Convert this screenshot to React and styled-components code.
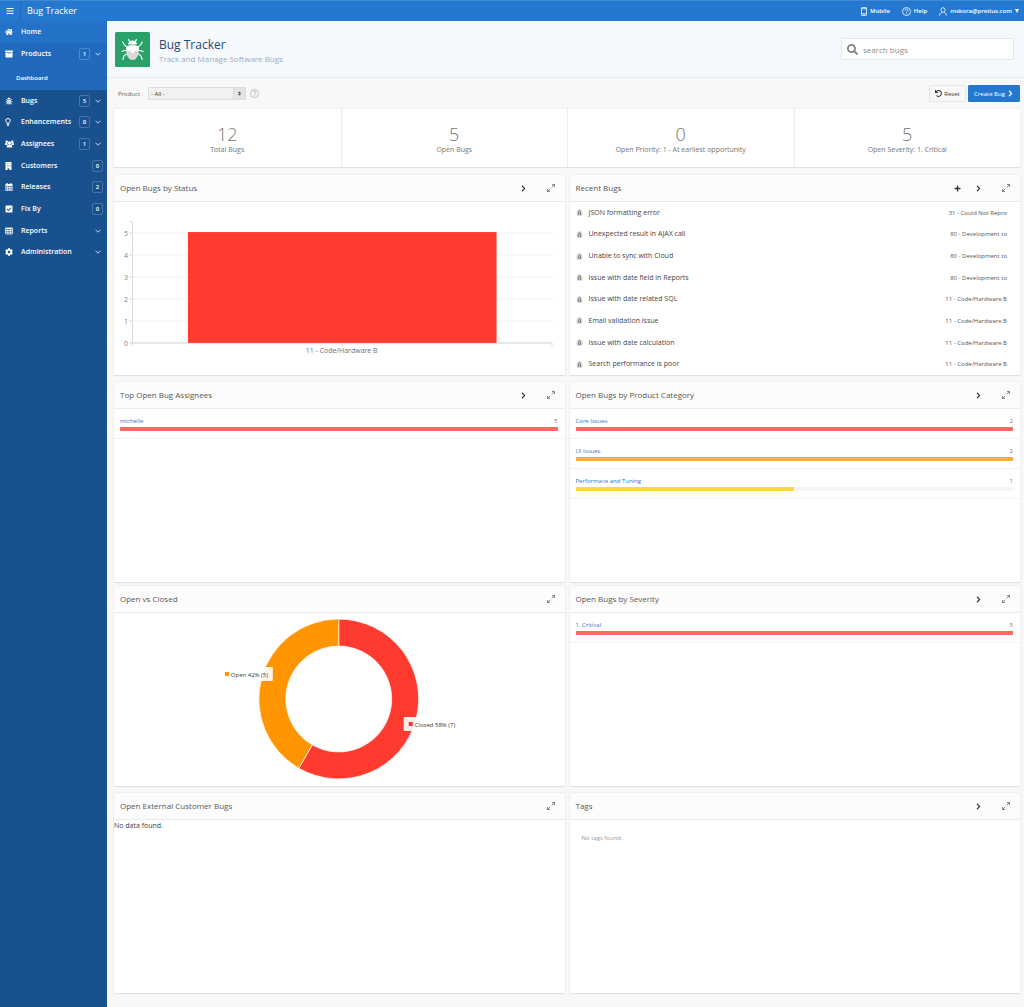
import { useState } from 'react';
import styled, { createGlobalStyle } from 'styled-components';
import {
  FaHome,
  FaArchive,
  FaCheckSquare,
  FaCog,
  FaSearch,
  FaUndo,
  FaPlus,
  FaChevronRight,
  FaBars,
  FaSort,
} from 'react-icons/fa';

const GlobalStyle = createGlobalStyle`
  * {
    box-sizing: border-box;
  }
  body {
    margin: 0;
    background: #f8f8f8;
    color: #404040;
    font-family: 'Open Sans', 'Noto Sans', sans-serif;
    font-size: 8px;
    line-height: 12px;
  }
  button, input, select {
    font-family: inherit;
  }
  button {
    cursor: pointer;
  }
  a {
    text-decoration: none;
  }
  h1, h2, p, ul {
    margin: 0;
    padding: 0;
  }
  svg {
    flex-shrink: 0;
  }
`;

// ---------- top bar ----------
const TopBar = styled.header`
  display: flex;
  align-items: center;
  height: 21px;
  padding-right: 5px;
  background: #2578cf;
  border-top: 1px solid #3f88d6;
  color: #fff;
`;
const MenuBtn = styled.button`
  display: flex;
  align-items: center;
  justify-content: center;
  width: 21px;
  height: 20px;
  padding: 0;
  background: none;
  border: 0;
  border-right: 1px solid #2169b8;
  color: #fff;
  font-size: 8px;
`;
const AppName = styled.a`
  flex: 1;
  padding-left: 6px;
  color: #fff;
  font-size: 9px;
`;
const TopLinks = styled.nav`
  display: flex;
  align-items: center;
  gap: 12px;
`;
const TopLink = styled.a`
  display: flex;
  align-items: center;
  gap: 3px;
  color: #fff;
  font-size: 6px;
  font-weight: 600;
`;

// ---------- side bar ----------
const Shell = styled.div`
  display: grid;
  grid-template-columns: 107px 1fr;
  min-height: calc(100vh - 21px);
`;
const SideBar = styled.nav`
  background: #19518f;
`;
const OpenGroup = styled.div`
  background: #2069bc;
`;
const NavList = styled.div`
  display: grid;
  grid-auto-rows: 1fr;
  height: 173px;
`;
const NavLink = styled.a`
  display: flex;
  align-items: center;
  height: ${(props) => (props.$fill ? 'auto' : '22px')};
  padding: 0 4px 0 5px;
  background: ${(props) => (props.$current ? '#2372c7' : 'transparent')};
  color: #fff;
  font-size: 7px;
  font-weight: 600;
`;
const NavIcon = styled.span`
  display: flex;
  width: 16px;
  font-size: 8px;
`;
const NavText = styled.span`
  flex: 1;
`;
const Badge = styled.span`
  width: 11px;
  height: 12px;
  border: 1px solid #ffffff33;
  border-radius: 2px;
  font-size: 6px;
  line-height: 10px;
  text-align: center;
`;
const Toggle = styled.span`
  display: flex;
  justify-content: flex-end;
  width: 13px;
  padding-right: 2px;
`;
const SubLink = styled.a`
  display: block;
  height: 25px;
  padding-left: 16px;
  color: #fff;
  font-size: 6px;
  font-weight: 600;
  line-height: 26px;
`;

// ---------- page header ----------
const Hero = styled.div`
  display: flex;
  align-items: center;
  gap: 9px;
  height: 57px;
  padding: 0 10px 0 8px;
  background: #f5f9fe;
  border-bottom: 1px solid #e8ebee;
`;
const HeroText = styled.div`
  flex: 1;
  padding-top: 4px;
`;
const Title = styled.h1`
  color: #1d4a7d;
  font-size: 12px;
  font-weight: 400;
  line-height: 16px;
`;
const SubTitle = styled.p`
  color: #9cadc1;
  font-size: 8px;
`;
const SearchBox = styled.label`
  display: flex;
  align-items: center;
  gap: 5px;
  width: 173px;
  height: 22px;
  padding: 0 5px;
  background: #fff;
  border: 1px solid #dbe8f6;
  border-radius: 1px;
  color: #808080;
  font-size: 11px;
`;
const SearchInput = styled.input`
  flex: 1;
  min-width: 0;
  padding: 0;
  background: none;
  border: 0;
  outline: 0;
  color: #404040;
  font-size: 8px;
  &::placeholder {
    color: #8a8a8a;
  }
`;

// ---------- filter row ----------
const FilterRow = styled.div`
  display: flex;
  align-items: center;
  height: 31px;
  padding: 0 4px 0 11px;
`;
const FilterLabel = styled.label`
  width: 30px;
  color: #606060;
  font-size: 6px;
`;
const SelectWrap = styled.div`
  display: flex;
  width: 98px;
  height: 13px;
  background: #f1f1f1;
  border: 1px solid #dcdcdc;
  border-radius: 1px;
`;
const Select = styled.select`
  flex: 1;
  padding: 0 2px;
  appearance: none;
  background: none;
  border: 0;
  color: #404040;
  font-size: 6px;
`;
const SelectArrow = styled.span`
  display: flex;
  align-items: center;
  justify-content: center;
  width: 12px;
  background: #e4e4e4;
  border-left: 1px solid #dcdcdc;
  color: #505050;
  font-size: 5px;
  pointer-events: none;
`;
const HelpBtn = styled.button`
  display: flex;
  margin: 0 auto 0 4px;
  padding: 0;
  background: none;
  border: 0;
  color: #b0b0b0;
`;
const Btn = styled.button`
  display: flex;
  align-items: center;
  justify-content: center;
  gap: 2px;
  width: ${(props) => (props.$hot ? '52px' : '37px')};
  height: 17px;
  margin-left: 2px;
  padding: 0;
  background: ${(props) => (props.$hot ? '#2578cf' : '#f8f8f8')};
  border: 1px solid ${(props) => (props.$hot ? '#2578cf' : '#e6e6e6')};
  border-radius: 1px;
  color: ${(props) => (props.$hot ? '#fff' : '#383838')};
  font-size: 6px;
  svg {
    width: 7px;
    height: 7px;
  }
`;

// ---------- content ----------
const Content = styled.div`
  display: grid;
  gap: 8px;
  padding: 0 4px 14px 7px;
`;
const Stats = styled.div`
  display: grid;
  grid-template-columns: repeat(4, 1fr);
  background: #fff;
  box-shadow: 0 0 1px #00000033, 0 1px 1px #0000000f;
`;
const Stat = styled.a`
  height: 58px;
  padding-top: 15px;
  border-left: 1px solid #ececec;
  color: #757575;
  font-size: 7px;
  line-height: 12px;
  text-align: center;
  &:first-child {
    border-left: 0;
  }
`;
const StatNumber = styled.div`
  font-size: 18px;
  font-weight: 300;
  line-height: 20px;
`;
const Groups = styled.div`
  display: grid;
  gap: 4px;
`;
const PanelGrid = styled.div`
  display: grid;
  grid-template-columns: repeat(2, minmax(0, 1fr));
  gap: 7px 5px;
`;
const PanelBox = styled.section`
  height: 200px;
  background: #fff;
  box-shadow: 0 0 1px #00000033, 0 1px 1px #0000000f;
`;
const PanelHead = styled.div`
  display: flex;
  align-items: center;
  height: 27px;
  padding: 0 10px 0 6px;
  background: #fcfcfc;
  border-bottom: 1px solid #ebebeb;
`;
const PanelTitle = styled.h2`
  flex: 1;
  color: #585858;
  font-size: 8px;
  font-weight: 400;
`;
const IconBtn = styled.button`
  display: flex;
  margin-left: ${(props) => (props.$wide ? '20px' : '14px')};
  padding: 0;
  background: none;
  border: 0;
  color: #303030;
  font-size: 7px;
`;
const BugList = styled.ul`
  display: grid;
  grid-auto-rows: 1fr;
  height: 173px;
  list-style: none;
`;
const BugItem = styled.li`
  display: flex;
  align-items: center;
  gap: 6px;
  padding: 0 13px 0 6px;
  color: #8a8a8a;
  font-size: 7px;
`;
const BugLink = styled.a`
  flex: 1;
  color: #454545;
`;
const BugStatus = styled.span`
  color: #555;
  font-size: 6px;
`;
const MeterRow = styled.div`
  height: 30px;
  padding: 6px 7px 0 6px;
  border-bottom: 1px solid #f3f3f3;
`;
const MeterHead = styled.div`
  display: flex;
  justify-content: space-between;
  color: #757575;
  font-size: 6px;
`;
const MeterLink = styled.a`
  color: #3a74bd;
`;
const Track = styled.div`
  height: 4px;
  background: #f6f6f6;
`;
const Fill = styled.div`
  height: 4px;
  background: ${(props) => props.$color};
`;
const Empty = styled.p`
  padding: ${(props) => (props.$small ? '12px' : '0')};
  color: ${(props) => (props.$small ? '#999' : '#404040')};
  font-size: ${(props) => (props.$small ? '6px' : '7px')};
`;
const Chart = styled.svg`
  display: block;
  width: 100%;
  height: 172px;
  font-size: ${(props) => props.$size};
`;

// ---------- icons ----------
function Chevron() {
  return (
    <svg width="6" height="4" viewBox="0 0 6 4" fill="none" stroke="#c5d5e8">
      <path d="M.5.7 3 3.2 5.5.7" />
    </svg>
  );
}

function HelpIcon() {
  return (
    <svg width="9" height="9" viewBox="0 0 18 18" fill="none" stroke="currentColor" strokeWidth="1.6">
      <circle cx="9" cy="9" r="8" />
      <path d="M6.4 7a2.6 2.6 0 1 1 3.8 2.3C9.3 9.8 9 10.2 9 11.3M9 12.8v1.6" />
    </svg>
  );
}

function PhoneIcon() {
  return (
    <svg width="6" height="9" viewBox="0 0 12 18" fill="none" stroke="currentColor" strokeWidth="1.6">
      <rect x="1" y="1" width="10" height="16" rx="1.5" />
      <path d="M1 3.5h10M1 13.500h10M5 15.300h2" />
    </svg>
  );
}

function UserIcon() {
  return (
    <svg width="8" height="9" viewBox="0 0 16 18" fill="none" stroke="currentColor" strokeWidth="1.7">
      <path d="M8 1.500c-2.500 0-4 1.800-4 4.300s1.500 4.700 4 4.700 4-2.200 4-4.700S10.500 1.500 8 1.500zM5.500 10c0 2-4.500 2-4.500 7M10.500 10c0 2 4.500 2 4.500 7" />
    </svg>
  );
}

function CaretIcon() {
  return (
    <svg width="4" height="4" viewBox="0 0 4 4" fill="currentColor">
      <path d="M0 0h4L2 4z" />
    </svg>
  );
}

function ExpandIcon() {
  return (
    <svg width="8" height="8" viewBox="0 0 16 16" fill="none" stroke="#6a6a6a" strokeWidth="1.6">
      <path d="M10 1h5v5M15 1 9.500 6.500M6 15H1v-5M1 15l5.500-5.500" />
    </svg>
  );
}

function BugIcon({ size = 8 }) {
  return (
    <svg width={size} height={size} viewBox="0 0 16 16" fill="currentColor">
      <path d="M5 4a3 3 0 0 1 6 0zM4.500 5h7v8q-1.500 2-3 2V7h-1v8q-1.500 0-3-2z" />
      <path
        d="M4.500 6.500 2 4M11.500 6.500 14 4M4.500 9.500H1M11.500 9.500H15M5 12l-3 2.500M11 12l3 2.500"
        fill="none"
        stroke="currentColor"
        strokeWidth="1.5"
      />
    </svg>
  );
}

function BulbIcon() {
  return (
    <svg width="6" height="8" viewBox="0 0 12 16" fill="none" stroke="currentColor" strokeWidth="2">
      <path d="M4 10.500C4 8.500 1.500 8 1.500 5.200a4.500 4.200 0 0 1 9 0C10.500 8 8 8.500 8 10.500z" />
      <path d="M3.500 12.500h5M4.500 15h3" />
    </svg>
  );
}

function UsersIcon() {
  return (
    <svg width="9" height="8" viewBox="0 0 18 16" fill="currentColor">
      <circle cx="3.500" cy="3.500" r="2.500" />
      <circle cx="14.500" cy="3.500" r="2.500" />
      <circle cx="9" cy="6" r="3.300" />
      <path d="M0 10V8q0-2 1.500-2h3l1 3L4 10zM18 10V8q0-2-1.500-2h-3l-1 3 1.500 1zM3.500 15v-2q0-3.500 2.500-3.500h6q2.500 0 2.500 3.500v2z" />
    </svg>
  );
}

function BuildingIcon() {
  return (
    <svg width="7" height="8" viewBox="0 0 14 16" fill="currentColor">
      <path
        fillRule="evenodd"
        d="M1 0h12v16H9v-3H5v3H1zM4 3v1.200h1.200V3zm3 0v1.200h1.200V3zm3 0v1.200h1.200V3zM4 6v1.200h1.200V6zm3 0v1.200h1.200V6zm3 0v1.200h1.200V6zM4 9v1.200h1.200V9zm3 0v1.200h1.200V9zm3 0v1.200h1.200V9z"
      />
    </svg>
  );
}

function CalendarIcon() {
  return (
    <svg width="8" height="8" viewBox="0 0 16 16" fill="currentColor">
      <path
        fillRule="evenodd"
        d="M1 2h2V0h2.500v2h5V0H13v2h2v14H1zM2.200 6v2.200h2.600V6zm4 0v2.200h3V6zm4.400 0v2.200h3V6zM2.200 9.500v2h2.600v-2zm4 0v2h3v-2zm4.400 0v2h3v-2zM2.200 12.800v2h2.600v-2zm4 0v2h3v-2zm4.400 0v2h3v-2z"
      />
    </svg>
  );
}

function TableIcon() {
  return (
    <svg width="8" height="8" viewBox="0 0 16 16" fill="none" stroke="currentColor" strokeWidth="1.5">
      <rect x="1" y="2" width="14" height="12" rx="1" />
      <path d="M1 3h14" strokeWidth="2.5" />
      <path d="M1 7h14M1 10.500h14M5.500 3v11M10.500 3v11" />
    </svg>
  );
}

function AppLogo() {
  return (
    <svg width="35" height="35" viewBox="0 0 35 35">
      <rect width="35" height="35" rx="1.5" fill="#28a268" />
      <g fill="none" stroke="#fff" strokeWidth="1.2">
        <path d="M15.500 11c-.3-1.500-1.700-2-2-3.800M19.500 11c.3-1.500 1.700-2 2-3.800" />
        <path d="M12.500 15.500c-1.500-1.500-4.300-2-4.800-6M22.500 15.500c1.500-1.500 4.300-2 4.800-6" />
        <path d="M12 18.500c-2 0-4 .2-5.500 1.200M23 18.500c2 0 4 .2 5.500 1.200" />
        <path d="M12.500 21.500c-2 .8-4.600 2.500-4.600 6.500M22.500 21.500c2 .8 4.600 2.500 4.600 6.500" />
      </g>
      <path d="M13 12.500a4.500 4 0 0 1 9 0z" fill="#fff" />
      <path d="M11.500 14.500q6-2.500 12 0c1 6-.7 13.500-6 13.500s-7-7.500-6-13.500z" fill="#d9d9d9" />
      <path d="M11.500 14.500q6-2.500 12 0c.3 2 .3 3.500 0 5l-3-1-3 3-3-3-3 1c-.3-1.500-.3-3 0-5z" fill="#fff" />
    </svg>
  );
}

// ---------- data ----------
const navItems = [
  { text: 'Bugs', icon: <BugIcon />, count: 5, open: true },
  { text: 'Enhancements', icon: <BulbIcon />, count: 0, open: true },
  { text: 'Assignees', icon: <UsersIcon />, count: 1, open: true },
  { text: 'Customers', icon: <BuildingIcon />, count: 0 },
  { text: 'Releases', icon: <CalendarIcon />, count: 2 },
  { text: 'Fix By', icon: <FaCheckSquare />, count: 0 },
  { text: 'Reports', icon: <TableIcon />, open: true },
  { text: 'Administration', icon: <FaCog />, open: true },
];

const stats = [
  { value: 12, text: 'Total Bugs' },
  { value: 5, text: 'Open Bugs' },
  { value: 0, text: 'Open Priority: 1 - At earliest opportunity' },
  { value: 5, text: 'Open Severity: 1. Critical' },
];

const recentBugs = [
  ['JSON formatting error', '31 - Could Not Repro'],
  ['Unexpected result in AJAX call', '80 - Development to'],
  ['Unable to sync with Cloud', '80 - Development to'],
  ['Issue with date field in Reports', '80 - Development to'],
  ['Issue with date related SQL', '11 - Code/Hardware B'],
  ['Email validation issue', '11 - Code/Hardware B'],
  ['Issue with date calculation', '11 - Code/Hardware B'],
  ['Search performance is poor', '11 - Code/Hardware B'],
];

const categories = [
  { text: 'Core Issues', value: 2, color: '#ff6961' },
  { text: 'UI Issues', value: 2, color: '#ffab3d' },
  { text: 'Performace and Tuning', value: 1, color: '#ffd83d' },
];

// ---------- parts ----------
function NavItem({ item, fill, current }) {
  return (
    <NavLink href="#" $fill={fill} $current={current}>
      <NavIcon>{item.icon}</NavIcon>
      <NavText>{item.text}</NavText>
      {item.count !== undefined && <Badge>{item.count}</Badge>}
      {item.open && (
        <Toggle>
          <Chevron />
        </Toggle>
      )}
    </NavLink>
  );
}

function Panel({ title, add, more, children }) {
  return (
    <PanelBox>
      <PanelHead>
        <PanelTitle>{title}</PanelTitle>
        {add && (
          <IconBtn aria-label="Add">
            <FaPlus />
          </IconBtn>
        )}
        {more && (
          <IconBtn aria-label="View all">
            <FaChevronRight />
          </IconBtn>
        )}
        <IconBtn $wide aria-label="Maximize">
          <ExpandIcon />
        </IconBtn>
      </PanelHead>
      {children}
    </PanelBox>
  );
}

function Meters({ rows }) {
  const max = Math.max(...rows.map((row) => row.value));
  return rows.map((row) => (
    <MeterRow key={row.text}>
      <MeterHead>
        <MeterLink href="#">{row.text}</MeterLink>
        <span>{row.value}</span>
      </MeterHead>
      <Track>
        <Fill $color={row.color} style={{ width: (row.value / max) * 100 + '%' }} />
      </Track>
    </MeterRow>
  ));
}

function StatusChart() {
  const ticks = [0, 1, 2, 3, 4, 5];
  return (
    <Chart $size="7px" viewBox="0 0 451 172" role="img" aria-label="Open bugs by status">
      {ticks.map((n) => (
        <g key={n}>
          <path d={`M19 ${141 - n * 22}H439`} stroke="#f1f1f1" />
          <path d={`M15 ${141 - n * 22}h4`} stroke="#d8d8d8" />
          <text x="14" y={144 - n * 22} textAnchor="end" fill="#808080">
            {n}
          </text>
        </g>
      ))}
      <path d="M15.500 19.500h3v124M18.500 141h420v3M228.500 141v3" fill="none" stroke="#d8d8d8" />
      <rect x="74" y="30" width="309" height="111" fill="#ff3b30" />
      <text x="228" y="151" textAnchor="middle" fill="#707070">
        11 - Code/Hardware B
      </text>
    </Chart>
  );
}

function DonutChart() {
  // split angle of the closed share (7 of 12)
  const a = (7 / 12) * 2 * Math.PI;
  const cx = 225;
  const cy = 86;
  const point = (r) => `${cx + r * Math.sin(a)} ${cy - r * Math.cos(a)}`;
  return (
    <Chart $size="6px" viewBox="0 0 451 172" role="img" aria-label="Open vs closed bugs">
      <path
        d={`M${cx} 6A80 80 0 1 1 ${point(80)}L${point(53)}A53 53 0 1 0 ${cx} 33Z`}
        fill="#ff3b30"
        stroke="#fff"
        strokeWidth=".7"
      />
      <path
        d={`M${point(80)}A80 80 0 0 1 ${cx} 6V33A53 53 0 0 0 ${point(53)}Z`}
        fill="#ff9500"
        stroke="#fff"
        strokeWidth=".7"
      />
      <rect x="107" y="54" width="52" height="14" rx="1" fill="#fff" opacity=".9" />
      <rect x="111" y="59" width="4" height="4" fill="#ff9500" />
      <text x="117" y="64" fill="#404040">
        Open 42% (5)
      </text>
      <rect x="290" y="104" width="58" height="14" rx="1" fill="#fff" opacity=".9" />
      <rect x="295" y="109" width="4" height="4" fill="#ff3b30" />
      <text x="301" y="114" fill="#404040">
        Closed 58% (7)
      </text>
    </Chart>
  );
}

function App() {
  let [product, setProduct] = useState('all');
  let [search, setSearch] = useState('');

  return (
    <>
      <GlobalStyle />
      <TopBar>
        <MenuBtn aria-label="Menu">
          <FaBars />
        </MenuBtn>
        <AppName href="#">Bug Tracker</AppName>
        <TopLinks>
          <TopLink href="#">
            <PhoneIcon /> Mobile
          </TopLink>
          <TopLink href="#">
            <HelpIcon /> Help
          </TopLink>
          <TopLink href="#">
            <UserIcon /> mskora@pretius.com <CaretIcon />
          </TopLink>
        </TopLinks>
      </TopBar>
      <Shell>
        <SideBar>
          <NavItem item={{ text: 'Home', icon: <FaHome /> }} current />
          <OpenGroup>
            <NavItem item={{ text: 'Products', icon: <FaArchive />, count: 1, open: true }} />
            <SubLink href="#">Dashboard</SubLink>
          </OpenGroup>
          <NavList>
            {navItems.map((item) => (
              <NavItem key={item.text} item={item} fill />
            ))}
          </NavList>
        </SideBar>
        <main>
          <Hero>
            <AppLogo />
            <HeroText>
              <Title>Bug Tracker</Title>
              <SubTitle>Track and Manage Software Bugs</SubTitle>
            </HeroText>
            <SearchBox>
              <FaSearch />
              <SearchInput
                aria-label="search bugs"
                placeholder="search bugs"
                value={search}
                onChange={(e) => setSearch(e.target.value)}
              />
            </SearchBox>
          </Hero>
          <FilterRow>
            <FilterLabel htmlFor="product">Product</FilterLabel>
            <SelectWrap>
              <Select id="product" value={product} onChange={(e) => setProduct(e.target.value)}>
                <option value="all">- All -</option>
              </Select>
              <SelectArrow>
                <FaSort />
              </SelectArrow>
            </SelectWrap>
            <HelpBtn aria-label="Help on product">
              <HelpIcon />
            </HelpBtn>
            <Btn>
              <FaUndo /> Reset
            </Btn>
            <Btn $hot>
              Create Bug <FaChevronRight />
            </Btn>
          </FilterRow>
          <Content>
            <Stats>
              {stats.map((stat) => (
                <Stat key={stat.text} href="#">
                  <StatNumber>{stat.value}</StatNumber>
                  {stat.text}
                </Stat>
              ))}
            </Stats>
            <Groups>
              <PanelGrid>
                <Panel title="Open Bugs by Status" more>
                  <StatusChart />
                </Panel>
                <Panel title="Recent Bugs" add more>
                  <BugList>
                    {recentBugs.map(([text, status]) => (
                      <BugItem key={text}>
                        <BugIcon size={7} />
                        <BugLink href="#">{text}</BugLink>
                        <BugStatus>{status}</BugStatus>
                      </BugItem>
                    ))}
                  </BugList>
                </Panel>
                <Panel title="Top Open Bug Assignees" more>
                  <Meters rows={[{ text: 'michelle', value: 5, color: '#ff6961' }]} />
                </Panel>
                <Panel title="Open Bugs by Product Category" more>
                  <Meters rows={categories} />
                </Panel>
              </PanelGrid>
              <PanelGrid>
                <Panel title="Open vs Closed">
                  <DonutChart />
                </Panel>
                <Panel title="Open Bugs by Severity" more>
                  <Meters rows={[{ text: '1. Critical', value: 5, color: '#ff6961' }]} />
                </Panel>
                <Panel title="Open External Customer Bugs">
                  <Empty>No data found.</Empty>
                </Panel>
                <Panel title="Tags" more>
                  <Empty $small>No tags found.</Empty>
                </Panel>
              </PanelGrid>
            </Groups>
          </Content>
        </main>
      </Shell>
    </>
  );
}

export default App;
